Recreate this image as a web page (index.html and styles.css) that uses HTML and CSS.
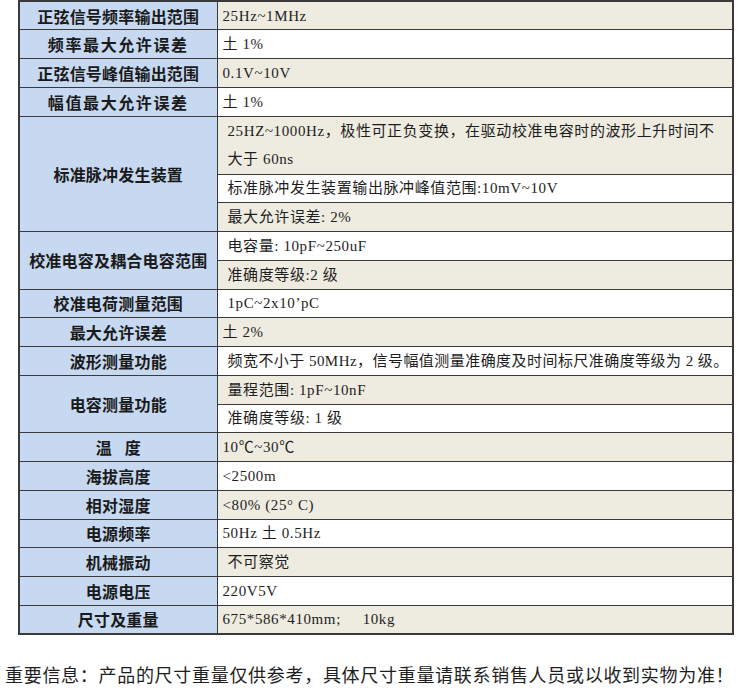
FILE: index.html
```html
<!DOCTYPE html>
<html lang="zh-CN">
<head>
<meta charset="utf-8">
<title>技术参数</title>
<link rel="stylesheet" href="styles.css">
</head>
<body>
<table class="spec">
  <tbody>
    <tr class="odd"><th>正弦信号频率输出范围</th><td>25Hz~1MHz</td></tr>
    <tr class="even"><th class="sp">频率最大允许误差</th><td>土 1%</td></tr>
    <tr class="odd"><th>正弦信号峰值输出范围</th><td>0.1V~10V</td></tr>
    <tr class="even"><th class="sp">幅值最大允许误差</th><td>土 1%</td></tr>
    <tr class="odd"><th rowspan="3">标准脉冲发生装置</th><td class="two ind">25HZ~1000Hz，极性可正负变换，在驱动校准电容时的波形上升时间不<br>大于 60ns</td></tr>
    <tr class="even"><td class="ind">标准脉冲发生装置输出脉冲峰值范围:10mV~10V</td></tr>
    <tr class="odd"><td class="ind">最大允许误差: 2%</td></tr>
    <tr class="even"><th rowspan="2">校准电容及耦合电容范围</th><td class="ind">电容量: 10pF~250uF</td></tr>
    <tr class="odd"><td class="ind">准确度等级:2 级</td></tr>
    <tr class="even"><th>校准电荷测量范围</th><td class="ind">1pC~2x10’pC</td></tr>
    <tr class="odd"><th>最大允许误差</th><td>土 2%</td></tr>
    <tr class="even"><th>波形测量功能</th><td class="ind long">频宽不小于 50MHz，信号幅值测量准确度及时间标尺准确度等级为 2 级。</td></tr>
    <tr class="odd"><th rowspan="2">电容测量功能</th><td class="ind">量程范围: 1pF~10nF</td></tr>
    <tr class="even"><td class="ind">准确度等级: 1 级</td></tr>
    <tr class="odd"><th><span class="gap">温 度</span></th><td>10℃~30℃</td></tr>
    <tr class="even"><th>海拔高度</th><td>&lt;2500m</td></tr>
    <tr class="odd"><th>相对湿度</th><td>&lt;80% (25° C)</td></tr>
    <tr class="even"><th>电源频率</th><td>50Hz 土 0.5Hz</td></tr>
    <tr class="odd"><th>机械振动</th><td class="ind">不可察觉</td></tr>
    <tr class="even"><th>电源电压</th><td>220V5V</td></tr>
    <tr class="odd"><th>尺寸及重量</th><td>675*586*410mm;&nbsp;&nbsp;&nbsp;&nbsp; 10kg</td></tr>
  </tbody>
</table>
<p class="note">重要信息：产品的尺寸重量仅供参考，具体尺寸重量请联系销售人员或以收到实物为准！</p>
</body>
</html>
```
FILE: styles.css
```css
html, body {
  margin: 0;
  padding: 0;
  background: #ffffff;
}

body {
  color: #1e1e1e;
  font-family: "Liberation Serif", "Noto Sans CJK SC", serif;
}

.spec {
  border-collapse: collapse;
  margin: 0 0 0 18px;
  width: 716px;
  table-layout: fixed;
  border: 2px solid #3a3a3a;
}

.spec th,
.spec td {
  border: 1px solid #3a3a3a;
  height: 28.75px;
  padding: 0;
  box-sizing: border-box;
}

.spec th {
  width: 198px;
  background: #c6d9f1;
  font-family: "Noto Sans CJK SC", sans-serif;
  font-weight: 700;
  font-size: 16px;
  letter-spacing: 0.2px;
  text-align: center;
  color: #1a1a1a;
}

.spec th.sp {
  letter-spacing: 1.6px;
}

.spec th .gap {
  word-spacing: 9px;
}

.spec td {
  font-size: 15px;
  letter-spacing: 0.6px;
  padding-left: 5px;
  text-align: left;
  line-height: 20px;
  white-space: nowrap;
}

.spec td.ind {
  padding-left: 10px;
}

.spec td.long {
  letter-spacing: 0.45px;
}

.spec td.two {
  line-height: 28px;
  height: 58px;
}

.spec tr.odd td {
  background: #eeebe0;
}

.spec tr.even td {
  background: #ffffff;
}

.note {
  margin: 31px 0 0 5px;
  font-size: 18px;
  line-height: 20px;
  letter-spacing: 0.7px;
  color: #1e1e1e;
}
```
